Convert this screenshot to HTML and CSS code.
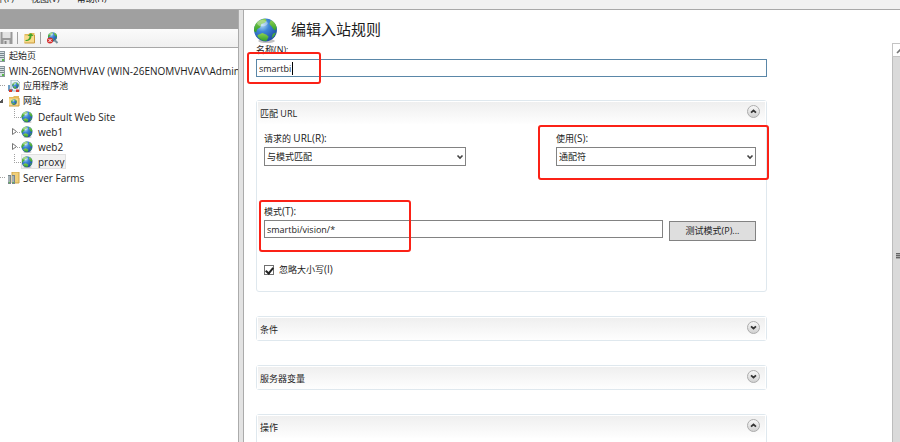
FILE: index.html
```html
<!DOCTYPE html>
<html lang="zh-CN">
  <head>
    <meta charset="utf-8">
    <title>IIS 管理器</title>
    <link rel="stylesheet" href="styles.css">
  </head>
  <body>
    <!-- shared icons -->
    <svg class="sprite" aria-hidden="true">
      <defs>
        <radialGradient id="sea" cx="35%" cy="28%" r="75%">
          <stop offset="0" stop-color="#b4dcf6"/>
          <stop offset=".4" stop-color="#3f86d6"/>
          <stop offset="1" stop-color="#1d4ba5"/>
        </radialGradient>
        <linearGradient id="land" x1="0" y1="0" x2="0" y2="1">
          <stop offset="0" stop-color="#8ed14f"/>
          <stop offset="1" stop-color="#2f9e2b"/>
        </linearGradient>
        <linearGradient id="knob" x1="0" y1="0" x2="0" y2="1">
          <stop offset="0" stop-color="#fafafa"/>
          <stop offset="1" stop-color="#cfcfcf"/>
        </linearGradient>
      </defs>
      <symbol id="globe" viewBox="0 0 24 24">
        <ellipse cx="13" cy="22" rx="8" ry="2" fill="#9a9a9a" opacity=".6"/>
        <circle cx="12" cy="11.500" r="11" fill="url(#sea)"/>
        <path d="M2 7C4 3 8 .8 12 .8l1 2-2 2-3 1-1 3-3 2-1 3-2-1C.8 11 1 9 2 7z" fill="url(#land)"/>
        <path d="M17 2c3 1.500 5 4 5.700 7l-1 3-2-1-2-3-2-2z" fill="url(#land)"/>
        <path d="M5 16l4-1.500 4 1.500 2 2-2 4c-4 .5-7-1.500-9-5z" fill="url(#land)"/>
        <path d="M19 15l3-1c-.8 2.500-2 4-4 5.500z" fill="#49ac3a"/>
        <ellipse cx="9" cy="5" rx="5" ry="3" fill="#fff" opacity=".35"/>
      </symbol>
      <symbol id="folder" viewBox="0 0 12 12">
        <path d="M1 2h4l1-1h5v10H1z" fill="#e2b95a"/>
        <path d="M1 3.500h10V11H1z" fill="#f8da8a"/>
        <path d="M1 11h10V3" fill="none" stroke="#c99a3c"/>
      </symbol>
      <symbol id="server" viewBox="0 0 12 12">
        <path d="M3 1h8v11H3z" fill="#8b989f"/>
        <path d="M4 2h6v9H4z" fill="#d7e0e3"/>
        <path d="M4 3.500h6M4 5.500h6M4 7.500h6" stroke="#77868d"/>
        <path d="M8 9h2v2H8z" fill="#57b847"/>
      </symbol>
      <symbol id="chevron-down" viewBox="0 0 8 6">
        <path d="M1.500 1.500l2.500 2.500 2.500-2.500" fill="none" stroke="currentColor" stroke-width="1.600"/>
      </symbol>
      <symbol id="knob-down" viewBox="0 0 13 13">
        <circle cx="6.500" cy="6.500" r="6" fill="url(#knob)" stroke="#acacac"/>
        <path d="M4 5.300l2.500 2.200L9 5.300" fill="none" stroke="#333" stroke-width="1.700"/>
      </symbol>
      <symbol id="knob-up" viewBox="0 0 13 13">
        <circle cx="6.500" cy="6.500" r="6" fill="url(#knob)" stroke="#acacac"/>
        <path d="M4 7.700l2.500-2.200L9 7.700" fill="none" stroke="#333" stroke-width="1.700"/>
      </symbol>
    </svg>

    <nav class="menubar">
      <button type="button">文件(F)</button>
      <button type="button">视图(V)</button>
      <button type="button">帮助(H)</button>
    </nav>

    <div class="workspace">
      <aside class="connections">
        <div class="pane-header"></div>
        <div class="toolbar">
          <button type="button" aria-label="保存">
            <svg viewBox="0 0 12 12"><path d="M0 0h12v12H0z" fill="#999"/><path d="M2 0h8v6H2z" fill="#e2e2e2"/><path d="M3 8h6v4H3z" fill="#ddd"/><path d="M4 9h2v3H4z" fill="#888"/></svg>
          </button>
          <span class="separator"></span>
          <button type="button" aria-label="上移">
            <svg viewBox="0 0 12 12"><use href="#folder"/><path d="M2 8c3 0 4-2 4-4H4l3.500-3L10 4H8c0 3-2 5-6 5z" fill="#45a52c"/></svg>
          </button>
          <span class="separator"></span>
          <button type="button" aria-label="断开连接">
            <svg viewBox="0 0 12 12"><use href="#globe" x="1" width="10" height="10"/><path d="M8 8l3 3" stroke="#78909c" stroke-width="2"/><circle cx="3.500" cy="8.500" r="3" fill="#d52f2f"/><path d="M2 7l3 3m0-3l-3 3" stroke="#fff"/></svg>
          </button>
        </div>

        <ul class="tree">
          <li>
            <div class="node root"><svg class="icon"><use href="#server"/></svg><span>起始页</span></div>
          </li>
          <li>
            <div class="node root"><svg class="icon"><use href="#server"/></svg><span class="latin">WIN-26ENOMVHVAV (WIN-26ENOMVHVAV\Administrator)</span></div>
            <ul>
              <li>
                <div class="node branch">
                  <svg class="icon" viewBox="0 0 12 12"><path d="M3 0h6l3 3v8H3z" fill="#eef4f8" stroke="#9eb2bf"/><use href="#globe" x="4" y="2" width="7" height="7"/><path d="M1 5v5h4" fill="none" stroke="#6f9fc4" stroke-width="2"/><path d="M1 9.500h3V12H1zM8 9.500h3V12H8z" fill="#d93a2b"/></svg>
                  <span>应用程序池</span>
                </div>
              </li>
              <li>
                <div class="node branch expanded">
                  <svg class="icon" viewBox="0 0 12 12"><use href="#folder"/><use href="#globe" x="3" y="4" width="6" height="6"/></svg>
                  <span>网站</span>
                </div>
                <ul class="sites">
                  <li><div class="node leaf"><svg class="icon"><use href="#globe"/></svg><span class="latin">Default Web Site</span></div></li>
                  <li><div class="node leaf collapsed"><svg class="arrow" viewBox="0 0 5 7"><path d="M.5.5v6l4-3z"/></svg><svg class="icon"><use href="#globe"/></svg><span class="latin">web1</span></div></li>
                  <li><div class="node leaf collapsed"><svg class="arrow" viewBox="0 0 5 7"><path d="M.5.5v6l4-3z"/></svg><svg class="icon"><use href="#globe"/></svg><span class="latin">web2</span></div></li>
                  <li><div class="node leaf"><div class="selected"><svg class="icon"><use href="#globe"/></svg><span class="latin">proxy</span></div></div></li>
                </ul>
              </li>
              <li>
                <div class="node branch">
                  <svg class="icon" viewBox="0 0 12 12"><path d="M4 0h7v11H4z" fill="#f0cf79" stroke="#cda54c"/><path d="M0 3h3v9H0zM4 3h3v9H4z" fill="#78868b"/><path d="M1 4v6M5 4v6" stroke="#cfdadd"/><path d="M1 10h1v1H1zM5 10h1v1H5z" fill="#5ac846"/></svg>
                  <span class="latin">Server Farms</span>
                </div>
              </li>
            </ul>
          </li>
        </ul>
      </aside>

      <div class="splitter"></div>

      <main class="feature">
        <header class="feature-header">
          <svg class="feature-icon"><use href="#globe"/></svg>
          <h1>编辑入站规则</h1>
        </header>

        <form class="rule-form">
          <div class="field name-field">
            <label for="name">名称(N):</label>
            <input id="name" class="textbox active" type="text" value="smartbi">
            <span class="caret"></span>
            <span class="mark mark-name"></span>
          </div>

          <section class="panel">
            <div class="panel-header">
              <h2>匹配 URL</h2>
              <button class="toggle" type="button" aria-label="折叠"><svg><use href="#knob-up"/></svg></button>
            </div>
            <div class="panel-body">
              <div class="row selects">
                <div class="field">
                  <label for="requested">请求的 <span class="latin">URL(R):</span></label>
                  <div class="dropdown">
                    <select id="requested"><option>与模式匹配</option></select>
                    <svg><use href="#chevron-down"/></svg>
                  </div>
                </div>
                <div class="field using">
                  <label for="using">使用<span class="latin">(S):</span></label>
                  <div class="dropdown">
                    <select id="using"><option>通配符</option></select>
                    <svg><use href="#chevron-down"/></svg>
                  </div>
                  <span class="mark mark-using"></span>
                </div>
              </div>
              <div class="row pattern">
                <div class="field">
                  <label for="pattern">模式<span class="latin">(T):</span></label>
                  <input id="pattern" class="textbox" type="text" value="smartbi/vision/*">
                  <span class="mark mark-pattern"></span>
                </div>
                <button class="test" type="button">测试模式(P)...</button>
              </div>
              <div class="check">
                <input id="ignore-case" type="checkbox" checked>
                <label for="ignore-case">忽略大小写<span class="latin">(I)</span></label>
              </div>
            </div>
          </section>

          <section class="panel">
            <div class="panel-header">
              <h2>条件</h2>
              <button class="toggle" type="button" aria-label="展开"><svg><use href="#knob-down"/></svg></button>
            </div>
          </section>

          <section class="panel">
            <div class="panel-header">
              <h2>服务器变量</h2>
              <button class="toggle" type="button" aria-label="展开"><svg><use href="#knob-down"/></svg></button>
            </div>
          </section>

          <section class="panel">
            <div class="panel-header">
              <h2>操作</h2>
              <button class="toggle" type="button" aria-label="折叠"><svg><use href="#knob-up"/></svg></button>
            </div>
            <div class="panel-body"></div>
          </section>
        </form>
      </main>

      <div class="scrollbar">
        <div class="scroll-up"><svg viewBox="0 0 8 6"><path d="M1 5l3-3 3 3" fill="none" stroke="#777" stroke-width="1.600"/></svg></div>
        <div class="scroll-thumb"><span class="grip"></span></div>
      </div>
    </div>
  </body>
</html>
```

FILE: styles.css
```css
* {
  box-sizing: border-box;
}

body {
  display: flex;
  flex-direction: column;
  height: 100vh;
  margin: 0;
  overflow: hidden;
  background: #fff;
  color: #1c1c1c;
  font: 9px/14px "Open Sans", "Noto Sans CJK SC", sans-serif;
}

button, input, select {
  margin: 0;
  color: inherit;
  font: inherit;
}

button {
  padding: 0;
  border: none;
  background: none;
}

h1, h2, ul {
  margin: 0;
  padding: 0;
  font-weight: normal;
}

ul {
  list-style: none;
}

.sprite {
  position: absolute;
  width: 0;
  height: 0;
}

.latin {
  font-size: 10px;
}

/* menu bar, scrolled half out of view */
.menubar {
  display: flex;
  flex: none;
  align-items: flex-end;
  gap: 17px;
  height: 10px;
  padding-bottom: 3px;
  border-bottom: 1px solid #a8a8a8;
  background: #f1f1f1;
  overflow: hidden;
}

.menubar button:first-child {
  margin-left: -14px;
}

.workspace {
  display: flex;
  flex: 1;
  min-height: 0;
}

/* connections pane */
.connections {
  flex: 0 0 238px;
  overflow: hidden;
}

.pane-header {
  height: 19px;
  background: #a0a0a0;
}

.toolbar {
  display: flex;
  align-items: center;
  gap: 4px;
  height: 19px;
  border-bottom: 1px solid #a8a8a8;
  background: linear-gradient(#fbfbfb, #f0f0f0);
}

.toolbar button, .toolbar svg {
  display: block;
  width: 13px;
  height: 12px;
}

.separator {
  width: 2px;
  height: 12px;
  border-left: 1px solid #a0a0a0;
}

.node {
  display: flex;
  align-items: center;
  gap: 3px;
  height: 15px;
  white-space: nowrap;
}

.icon {
  flex: none;
  width: 12px;
  height: 12px;
}

.root {
  margin-left: -6px;
}

.branch::before {
  content: "";
  width: 5px;
  border-top: 1px dotted #a0a0a0;
}

.expanded::before {
  height: 4px;
  border: none;
  background: linear-gradient(135deg, transparent 40%, #555 40%) no-repeat 0 0 / 3px 4px;
}

.sites {
  padding: 1px 0;
}

.leaf {
  position: relative;
  gap: 5px;
  padding-left: 21px;
}

.leaf::before {
  content: "";
  position: absolute;
  left: 14px;
  top: 0;
  width: 6px;
  height: 8px;
  border: dotted #a0a0a0;
  border-width: 0 0 1px 1px;
}

.leaf.collapsed::before {
  border-left: none;
}

.arrow {
  position: absolute;
  left: 12px;
  width: 5px;
  height: 7px;
  fill: #fff;
  stroke: #777;
}

.selected {
  display: flex;
  align-items: center;
  gap: 5px;
  height: 15px;
  padding-right: 2px;
  outline: 1px solid #e0e0e0;
  outline-offset: -1px;
  background: #f2f2f2;
}

.splitter {
  flex: none;
  width: 6px;
  border: solid #ababab;
  border-width: 0 1px;
  background: #e3e3e3;
}

/* feature page */
.feature {
  flex: 1;
  min-width: 0;
  padding: 8px 12px 0;
  overflow: hidden;
}

.feature-header {
  display: flex;
  align-items: center;
  gap: 13px;
  height: 25px;
  margin-left: -3px;
}

.feature-icon {
  width: 25px;
  height: 25px;
}

h1 {
  padding-bottom: 4px;
  font-size: 15px;
  line-height: 22px;
}

.rule-form {
  max-width: 511px;
}

.field {
  position: relative;
}

.field label {
  display: block;
  height: 16px;
}

.textbox {
  display: block;
  width: 100%;
  height: 18px;
  padding: 0 2px;
  border: 1px solid #828282;
  border-radius: 0;
  background: #fff;
}

.textbox.active {
  border-color: #5a87a8;
  outline: none;
}

.caret {
  position: absolute;
  left: 36px;
  bottom: 2px;
  width: 1px;
  height: 13px;
  background: #000;
}

/* red highlight frames over the fields */
.mark {
  position: absolute;
  border: 2px solid #fb2116;
  border-radius: 3px;
  pointer-events: none;
}

.mark-name {
  inset: 9px auto -7px -9px;
  width: 74px;
}

.mark-using {
  inset: -6px -13px -14px -18px;
}

.mark-pattern {
  inset: -4px auto -14px -5px;
  width: 152px;
}

.panel {
  margin-top: 24px;
  border: 1px solid #dfe8ee;
  border-radius: 3px;
}

.name-field + .panel {
  margin-top: 23px;
}

.panel-header {
  display: flex;
  align-items: center;
  justify-content: space-between;
  height: 23px;
  padding: 0 5px 0 2px;
  border: solid #fff;
  border-width: 1px 1px 0;
  background: linear-gradient(#efefef, #fefefe);
}

h2 {
  padding-top: 2px;
  font-size: 9px;
}

.toggle, .toggle svg {
  display: block;
  width: 13px;
  height: 13px;
}

.toggle {
  margin-bottom: 3px;
}

.panel-body {
  padding: 7px 10px 14px 7px;
}

.row {
  display: flex;
  align-items: flex-start;
}

.row .field {
  flex: 1;
}

.selects {
  gap: 90px;
}

.row .using {
  flex: 0 0 200px;
}

.dropdown {
  position: relative;
}

.dropdown select {
  display: block;
  width: 100%;
  height: 19px;
  padding: 0 2px;
  border: 1px solid #828282;
  border-radius: 0;
  background: #fff;
  appearance: none;
}

.dropdown svg {
  position: absolute;
  right: 2px;
  top: 7px;
  width: 8px;
  height: 6px;
  color: #444;
  pointer-events: none;
}

.pattern {
  gap: 6px;
  margin-top: 38px;
}

.test {
  width: 87px;
  height: 20px;
  margin-top: 17px;
  border: 1px solid #828282;
  background: #dedede;
}

.check {
  display: flex;
  align-items: center;
  gap: 5px;
  margin-top: 21px;
}

.check input {
  display: grid;
  place-items: center;
  width: 10px;
  height: 10px;
  border: 1px solid #707070;
  background: #fff;
  appearance: none;
}

.check input:checked::before {
  content: "";
  width: 3px;
  height: 6px;
  margin-bottom: 1px;
  border: solid #222;
  border-width: 0 2px 2px 0;
  transform: rotate(40deg);
}

/* vertical scrollbar */
.scrollbar {
  display: flex;
  flex-direction: column;
  flex: 0 0 8px;
  padding-top: 33px;
  overflow: hidden;
}

.scroll-up {
  height: 14px;
  padding: 4px 0 0 3px;
  border: 1px solid #c4c4c4;
  border-right: none;
}

.scroll-up svg {
  display: block;
  width: 8px;
  height: 6px;
}

.scroll-thumb {
  display: flex;
  flex: 1;
  align-items: center;
  padding: 12px 0 0 3px;
  border-left: 1px solid #bdbdbd;
  background: #dadada;
}

.grip {
  width: 8px;
  height: 6px;
  background: repeating-linear-gradient(#666 0 1px, #aaa 1px 2px);
}
```
